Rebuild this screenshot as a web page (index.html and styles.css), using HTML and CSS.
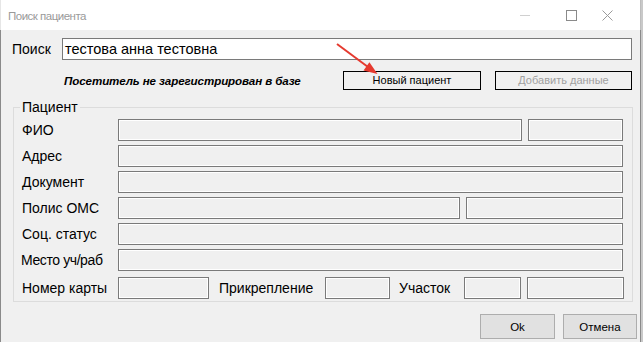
FILE: index.html
```html
<!DOCTYPE html>
<html lang="ru">
<head>
<meta charset="utf-8">
<title>Поиск пациента</title>
<link rel="stylesheet" href="styles.css">
</head>
<body>
<div class="window">
  <div class="titlebar">
    <span class="title">Поиск пациента</span>
    <div class="controls">
      <span class="ctl ctl-min"><svg width="10" height="10" viewBox="0 0 10 10"><line x1="0" y1="5.5" x2="10" y2="5.5" stroke="#d0d0d0" stroke-width="1"/></svg></span>
      <span class="ctl ctl-max"><svg width="11" height="11" viewBox="0 0 11 11"><rect x="0.5" y="0.5" width="10" height="10" fill="none" stroke="#8a8a8a" stroke-width="1"/></svg></span>
      <span class="ctl ctl-close"><svg width="11" height="11" viewBox="0 0 11 11"><path d="M0.5 0.5 L10.5 10.5 M10.5 0.5 L0.5 10.5" stroke="#9a9a9a" stroke-width="1" fill="none"/></svg></span>
    </div>
  </div>
  <div class="client">
    <div class="search-row">
      <span class="search-label">Поиск</span>
      <div class="input">тестова анна тестовна</div>
    </div>
    <div class="action-row">
      <span class="msg">Посетитель не зарегистрирован в базе</span>
      <button class="btn btn-default">Новый пациент</button>
      <button class="btn btn-disabled">Добавить данные</button>
    </div>
    <div class="group">
      <span class="legend">Пациент</span>
      <div class="row row-fio"><span class="lbl">ФИО</span><div class="field"></div><div class="field"></div></div>
      <div class="row row-one"><span class="lbl">Адрес</span><div class="field"></div></div>
      <div class="row row-one"><span class="lbl">Документ</span><div class="field"></div></div>
      <div class="row row-polis"><span class="lbl">Полис ОМС</span><div class="field"></div><div class="field"></div></div>
      <div class="row row-one"><span class="lbl">Соц. статус</span><div class="field"></div></div>
      <div class="row row-one"><span class="lbl lbl-tight">Место уч/раб</span><div class="field"></div></div>
      <div class="row row-last">
        <span class="lbl">Номер карты</span>
        <div class="field f-card"></div>
        <span class="lbl2 lbl-attach">Прикрепление</span>
        <div class="field f-attach"></div>
        <span class="lbl2 lbl-area">Участок</span>
        <div class="field f-area"></div>
        <div class="field f-area2"></div>
      </div>
    </div>
    <div class="footer">
      <button class="btn2 btn-ok">Ok</button>
      <button class="btn2 btn-cancel">Отмена</button>
    </div>
  </div>
  <svg class="arrow" width="643" height="342" viewBox="0 0 643 342">
    <line x1="337" y1="44" x2="368" y2="67" stroke="#e53a2f" stroke-width="2"/>
    <polygon points="377.5,74 363.5,70.4 369.4,62.3" fill="#e53a2f"/>
  </svg>
</div>
</body>
</html>
```

FILE: styles.css
```css
* { box-sizing: border-box; }
html, body { margin: 0; padding: 0; }
body {
  width: 643px;
  height: 342px;
  background: #c9c9c9;
  font-family: "Liberation Sans", Arial, sans-serif;
  color: #000;
  overflow: hidden;
}
.window {
  width: 641px;
  height: 342px;
  position: relative;
  background: #f0f0f0;
}
.titlebar {
  height: 30px;
  background: #fff;
  display: flex;
  align-items: center;
  border-left: 1px solid #e6e6e6;
  border-right: 1px solid #bdbdbd;
}
.title {
  margin-left: 7px;
  font-size: 11.5px;
  color: #9a9a9a;
  letter-spacing: -0.5px;
  margin-top: 1px;
}
.controls {
  margin-left: auto;
  display: flex;
  align-items: center;
  height: 30px;
}
.ctl { display: flex; align-items: center; justify-content: center; height: 30px; }
.ctl svg { display: block; }
.ctl-min { width: 10px; margin-right: 36px; }
.ctl-max { width: 11px; margin-right: 25px; }
.ctl-close { width: 11px; margin-right: 27px; }

.client {
  height: 312px;
  border-left: 1px solid #8a8a8a;
  border-right: 1px solid #8a8a8a;
  font-size: 14px;
}
.search-row {
  display: flex;
  align-items: center;
  padding-top: 8px;
  padding-left: 11px;
}
.search-label { width: 50px; font-size: 14px; }
.input {
  width: 570px;
  height: 22px;
  border: 1px solid #7a7a7a;
  background: #fff;
  padding-left: 2px;
  line-height: 20px;
  font-size: 14.5px;
}
.action-row {
  display: flex;
  align-items: center;
  margin-top: 11px;
  height: 19px;
  padding-left: 63px;
}
.msg {
  width: 279px;
  font-weight: bold;
  font-style: italic;
  font-size: 11.6px;
  letter-spacing: -0.1px;
}
.btn {
  height: 19px;
  background: #f0f0f0;
  border: 1px solid #000;
  font-family: "Liberation Sans", Arial, sans-serif;
  font-size: 11px;
  padding: 0;
  margin: 0;
  line-height: 17px;
}
.btn-default { width: 138px; color: #000; }
.btn-disabled { width: 137px; margin-left: 14px; color: #a0a0a0; }

.group {
  position: relative;
  margin-top: 17px;
  margin-left: 12px;
  width: 620px;
  border: 1px solid #dcdcdc;
  padding: 11px 9px 2px 8px;
  display: flex;
  flex-direction: column;
  gap: 4px;
}
.legend {
  position: absolute;
  left: 6px;
  top: -9px;
  padding: 0 2px;
  background: #f0f0f0;
  font-size: 14px;
  line-height: 16px;
}
.row {
  display: flex;
  align-items: center;
  height: 22px;
  gap: 6px;
}
.lbl {
  width: 96px;
  margin-right: -6px;
  flex: none;
  font-size: 14px;
  white-space: nowrap;
}
.lbl-tight { letter-spacing: -0.4px; margin-left: -1px; width: 97px; }
.field {
  height: 22px;
  border: 1px solid #7a7a7a;
  background: #f0f0f0;
  box-shadow: inset -1px -1px 0 #fff, inset 1px 1px 0 #fff;
  flex: 1 1 auto;
}
.row-fio .field:last-child { flex: none; width: 95px; }
.row-polis .field:last-child { flex: none; width: 157px; }
.row-last { margin-top: 2px; gap: 0; }
.row-last .lbl { margin-right: 0; }
.f-card { flex: none; width: 91px; }
.lbl2 { flex: none; font-size: 14px; white-space: nowrap; }
.lbl-attach { width: 116px; padding-left: 10px; }
.f-attach { flex: none; width: 65px; }
.lbl-area { width: 74px; padding-left: 9px; }
.f-area { flex: none; width: 57px; }
.f-area2 { flex: none; width: 97px; margin-left: 6px; }

.footer {
  display: flex;
  justify-content: flex-end;
  margin-top: 12px;
  padding-right: 3px;
  gap: 8px;
}
.btn2 {
  height: 25px;
  background: #e1e1e1;
  border: 1px solid #adadad;
  font-family: "Liberation Sans", Arial, sans-serif;
  font-size: 11.5px;
  padding: 0;
  margin: 0;
  color: #000;
}
.btn-ok { width: 75px; }
.btn-cancel { width: 74px; }

.arrow {
  position: absolute;
  left: 0;
  top: 0;
  pointer-events: none;
}
```
